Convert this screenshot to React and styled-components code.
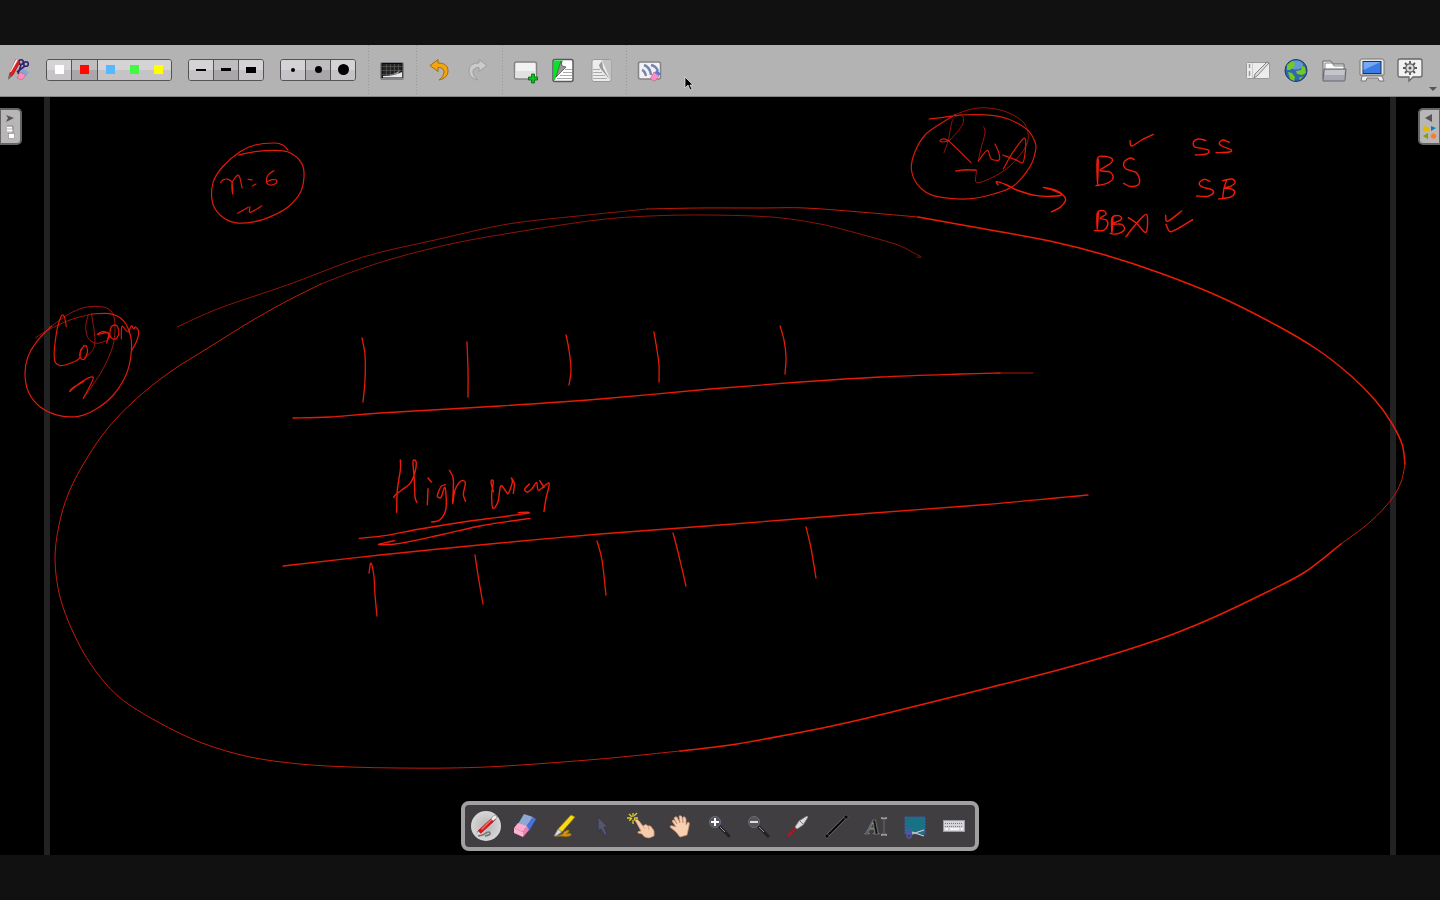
import React from 'react';
import styled, { createGlobalStyle } from 'styled-components';

const GlobalStyle = createGlobalStyle`
  * { box-sizing: border-box; }
  body { margin: 0; background: #111; font-family: "Liberation Sans", Arial, sans-serif; }
`;

const Screen = styled.div`
  min-height: 100vh;
  display: flex;
  flex-direction: column;
  padding: 45px 0;
  background: #111;
`;

const Toolbar = styled.header`
  position: relative;
  display: flex;
  align-items: center;
  height: 52px;
  flex: none;
  padding: 0 18px 2px 6px;
  background: #b3b3b3;
  border-bottom: 1px solid #858585;
`;

const IconButton = styled.button`
  width: 24px;
  height: 26px;
  flex: none;
  display: flex;
  justify-content: center;
  align-items: center;
  padding: 0;
  border: 0;
  background: none;

  svg { flex: none; }
`;

const IconRow = styled.div`
  display: flex;
  gap: 14px;
`;

const Spacer = styled.div`
  flex: 1;
`;

const Divider = styled.span`
  align-self: stretch;
  width: 1px;
  margin: 0 11px 0 12px;
  background: repeating-linear-gradient(#999 0 1px, #b3b3b3 1px 3px);
`;

const Segments = styled.div`
  display: flex;
  flex: none;
  width: ${(p) => p.$width}px;
  height: 22px;
  margin-left: 16px;
  border: 1px solid #555358;
  border-radius: 3px;
  overflow: hidden;
`;

const Segment = styled.button`
  flex: 1;
  display: grid;
  place-items: center;
  padding: 0;
  border: 0 solid #555358;
  border-width: ${(p) => (p.$on ? '0 1px' : '0')};
  background: ${(p) =>
    p.$on
      ? 'linear-gradient(#bfbdc0 50%, #a9a7aa 50%)'
      : 'linear-gradient(#d5d3d6 50%, #c5c3c6 50%)'};
`;

const Swatch = styled.span`
  width: ${(p) => p.$w}px;
  height: ${(p) => p.$h}px;
  border-radius: ${(p) => (p.$round ? '50%' : '0')};
  background: ${(p) => p.$color || '#000'};
`;

const MoreMark = styled.span`
  position: absolute;
  right: 3px;
  bottom: 5px;
  border: 4px solid transparent;
  border-top-color: #555;
  border-bottom: 0;
`;

const Pointer = styled.svg`
  position: absolute;
  left: 684px;
  top: 31px;
`;

const Board = styled.main`
  position: relative;
  flex: 1;
  min-height: 758px;
  background: #000;
  padding: 0 44px;
  display: flex;
`;

const Sheet = styled.div`
  flex: 1;
  border: solid #222224;
  border-width: 0 6px;
`;

const Ink = styled.svg`
  position: absolute;
  left: 0;
  top: 0;
  width: 100%;
  fill: none;
  stroke-linecap: round;
  stroke-linejoin: round;
`;

const SideTab = styled.button`
  position: absolute;
  top: 11px;
  ${(p) => (p.$right ? 'right: 0;' : 'left: 0;')}
  width: 22px;
  height: 37px;
  padding: 0;
  background: #b9b6b8;
  border: 2px solid #656366;
  border-width: ${(p) => (p.$right ? '2px 1px 2px 2px' : '2px 2px 2px 1px')};
  border-radius: ${(p) => (p.$right ? '5px 0 0 5px' : '0 5px 5px 0')};
`;

const Palette = styled.nav`
  position: absolute;
  bottom: 4px;
  left: 50%;
  transform: translateX(-50%);
  display: flex;
  align-items: center;
  gap: 9px;
  height: 50px;
  padding: 0 6px;
  background: #403e41;
  border: 4px solid #a19fa2;
  border-radius: 8px;
`;

const ToolButton = styled.button`
  width: 30px;
  height: 30px;
  padding: 0;
  border: 0;
  border-radius: 50%;
  background: ${(p) => (p.$on ? 'radial-gradient(circle, #b5b5b5, #d2d2d2 60%, #e6e6e6)' : 'none')};
`;

const Icon = ({ size = 26, children }) => (
  <svg width={size} height={size} viewBox={`0 0 ${size} ${size}`} display="block" overflow="visible" aria-hidden="true">
    {children}
  </svg>
);

const icons = {
  stylus: (
    <g transform="translate(1 0)">
      <g fill="none" stroke="#302070" strokeWidth="1.6">
        <circle cx="15" cy="5" r="2.3" /><circle cx="20" cy="7" r="2.3" />
        <path d="M15 8l-3 9M19 9l-8 6" />
      </g>
      <path d="M10 2l4 3-7 13-4 3 1-5z" fill="#e91b20" stroke="#872020" strokeWidth=".7" />
      <path d="M10 2l2 1-7 12-1 0z" fill="#eee" /><path d="M3 17l3 2-4 4z" fill="#666" />
      <path d="M13 17l4-5 6 3-4 5z" fill="#81a5de" /><path d="M12 19l2-4 6 3-4 5-5-2z" fill="#ff8dbd" stroke="#b66" strokeWidth=".6" />
    </g>
  ),
  backdrop: (
    <>
      <rect x="1" y="5" width="24" height="18" rx="2" fill="#85838a" />
      <rect x="3" y="6.500" width="20" height="14" fill="#242424" stroke="#080808" />
      <path d="M3 9.500h20M3 13.500h20M3 17.500h20M7.500 7v13M11.500 7v13M15.500 7v13M19.500 7v13" stroke="#5c5c5c" strokeWidth=".7" />
      <path d="M4 19q12 0 19-4v5.500H4z" fill="#e8e8e8" /><path d="M9 18q8-1 12-5l-2 4z" fill="#999" />
    </>
  ),
  undo: (
    <path d="M3 8.500L11 2.500v3.500c7 0 10 3 10 8 0 5-4 8-9 9 3-2 5-5 5-8 0-3-2-4.500-6-4.500v4z" fill="#f3a60c" stroke="#a06a10" strokeLinejoin="round" />
  ),
  redo: (
    <path d="M22 8.500L14 2.500v3.500c-7 0-10 3-10 8 0 5 4 8 9 9-3-2-5-5-5-8 0-3 2-4.500 6-4.500v4z" fill="#cbcbcb" stroke="#9c9c9c" strokeLinejoin="round" />
  ),
  addPage: (
    <>
      <rect x="1.500" y="5" width="22" height="17" rx="2" fill="#f2f2f2" stroke="#858286" strokeWidth="1.500" />
      <path d="M2.500 14h20v7h-20z" fill="#e1e1e1" />
      <path d="M18.500 17h3v3h3v3h-3v3h-3v-3h-3v-3h3z" fill="#08c51b" stroke="#056010" strokeWidth=".8" />
    </>
  ),
  nextPage: (
    <>
      <rect x="2" y="2.500" width="20" height="22" rx="2" fill="#fff" stroke="#58595c" strokeWidth="1.500" />
      <path d="M3 3.500h9L4 23H3z" fill="#08e227" /><path d="M10 4l1 5 4 1L5 20z" fill="#999" stroke="#555" strokeWidth=".8" />
      <path d="M14 12.500h7M12 15.500h9M9 18.500h12M6 21.500h15" stroke="#aaa" />
    </>
  ),
  lastPage: (
    <>
      <rect x="3" y="2.500" width="19" height="22" rx="2" fill="#ececec" stroke="#999" />
      <path d="M13 3h8.500v20z" fill="#c2c2c2" /><path d="M13 4l-3 4 1 3 10 12-7-12z" fill="#999" />
      <path d="M4 12.500h7M4 15.500h9M4 18.500h12M4 21.500h14" stroke="#aaa" />
    </>
  ),
  erase: (
    <>
      <rect x="1.500" y="5" width="22" height="17" rx="2" fill="#f2f2f4" stroke="#858286" strokeWidth="1.500" />
      <path d="M5 13q3 1 4 6M7 8q6 2 7 10M14 8q5 1 7 6" fill="none" stroke="#7884b0" strokeWidth="2.400" />
      <path d="M17 16l3-3 4 4-4 3z" fill="#577ade" /><path d="M17 15l5 4-4 5-5-2z" fill="#ff8fc6" stroke="#bb6698" strokeWidth=".7" />
    </>
  ),
  board: (
    <>
      <rect x="1.500" y="5.500" width="23" height="16" rx="1" fill="#ececec" stroke="#999" />
      <path d="M4.500 7v4M4.500 14v5" stroke="#999" strokeWidth="1.500" /><path d="M7.500 6v15" stroke="#ccc" />
      <path d="M24 6L12 19l-3 2 1-4L22 5z" fill="#ddd" stroke="#777" strokeWidth=".9" />
    </>
  ),
  globe: (
    <>
      <circle cx="13" cy="13.500" r="11" fill="#3266ae" stroke="#183968" />
      <ellipse cx="13" cy="8" rx="7" ry="4.500" fill="#78aee0" opacity=".7" />
      <path d="M4 8l5-4 3 2-1 4-4 3-3 0zM5 15l4 1 3 4-1 4-4-2zM13 14l5-1 1-4 3 1 1 6-4 2-5-1zM16 21l4-2-3 4z" fill="#72ca20" />
    </>
  ),
  folder: (
    <>
      <path d="M2 22V4h8l2 3h11v6" fill="#eee" stroke="#666" /><path d="M4 21V6h7l2 3h10v9" fill="#fff" stroke="#888" />
      <path d="M2 24l1-12h22l-1 11q0 1-1 1z" fill="#a8a8b2" stroke="#65656e" /><path d="M4 13h20l-1 5H4z" fill="#c4c4cb" />
    </>
  ),
  display: (
    <>
      <path d="M3 2h20q2 0 2 2v14H1V4q0-2 2-2z" fill="#e8e8e8" stroke="#777" />
      <rect x="4" y="4.500" width="18" height="12" fill="#397ce5" stroke="#18345e" />
      <path d="M4.500 5h17L4.500 13z" fill="#76a9f5" />
      <path d="M2 24l1-5h20l2 5h-5l-1-3H8l-1 3z" fill="#eee" stroke="#777" />
    </>
  ),
  settings: (
    <>
      <path d="M3 2h20q2 0 2 2v14q0 2-2 2h-7l-4 4v-4H3q-2 0-2-2V4q0-2 2-2z" fill="#f2f2f2" stroke="#666" strokeWidth="1.300" />
      <path d="M13 4v14M6 11h14M8 6l10 10M18 6L8 16" stroke="#555" strokeWidth="1.800" />
      <circle cx="13" cy="11" r="4.200" fill="#ddd" stroke="#666" strokeWidth="1.300" /><circle cx="13" cy="11" r="1.500" fill="#555" />
    </>
  ),
};

const toolIcons = {
  pen: (
    <>
      <path d="M7 25q6-1 8-3 3-2 4 0 1 2-5 3" fill="none" stroke="#777" strokeWidth="1.600" />
      <path d="M22 6l3 2L9 23l-3 1 1-4z" fill="#d9141a" stroke="#9b171b" strokeWidth=".8" /><path d="M10 18L20 8l1 1-10 10z" fill="#ff6b68" />
      <path d="M22 5l3-1 1 3-4 3-2-2z" fill="#eee" stroke="#888" strokeWidth=".6" /><path d="M7 20l3 3-5 2z" fill="#ddd" />
    </>
  ),
  eraser: (
    <>
      <path d="M14 3l9 3-7 10-8-3z" fill="#8da8d3" /><path d="M23 6l3 2-7 12-3-4z" fill="#4b70e0" />
      <path d="M8 12l9 3-4 6-9-4z" fill="#ffa9cc" /><path d="M4 17l9 4v5l-9-4z" fill="#ffb4d0" /><path d="M13 21l4-6 2 4-6 7z" fill="#e783b7" />
    </>
  ),
  marker: (
    <>
      <path d="M6 25q9-1 9-4 5-3 5-1-1 2-3 3 6-1 5 1-2 2-9 1z" fill="#d69a0b" stroke="#a97507" />
      <path d="M22 4l4 2-13 15-5 2 1-5z" fill="#f8dc13" stroke="#9f7708" strokeWidth=".8" /><path d="M9 18l4 3-6 4-2 0z" fill="#ddd" stroke="#75777a" strokeWidth=".8" />
    </>
  ),
  select: <path d="M10 6l10 10-4 0 3 7-2 2-4-7-3 2z" fill="#55566a" stroke="#343752" />,
  touch: (
    <>
      <path d="M6 2v11M0 7h11M2 3l8 8M10 2L2 10" stroke="#ddcd28" strokeWidth="1.300" strokeDasharray="4 3" />
      <path d="M8 9q2-2 4 1l4 5q3-3 5 0 3-1 4 2 3 2 2 8l-5 2q-5 0-7-4l-4-1q-1-2 3-2z" fill="#f7cdae" stroke="#c98f6c" strokeWidth=".8" />
      <path d="M16 15l2 3M21 15l1 4" stroke="#ce9570" strokeWidth=".7" />
    </>
  ),
  hand: (
    <path d="M9 6q2-1 3 2l2 4-1-7q2-1 3 1l1 6V6q2-1 3 2v6l2-3q2 0 1 4l-2 9-7 2-4-5-6-5q0-2 3-1l3 1-4-6q1-2 3 0l2 3-3-6z" fill="#f8cfb1" stroke="#c99472" strokeWidth=".8" />
  ),
  zoomIn: (
    <>
      <path d="M15 16l9 9" stroke="#222" strokeWidth="3" strokeLinecap="round" /><path d="M15 16l5 5" stroke="#999" />
      <circle cx="10" cy="11" r="5.500" fill="#555" stroke="#68688a" /><path d="M10 7v8M6 11h8" stroke="#fff" strokeWidth="2" />
    </>
  ),
  zoomOut: (
    <>
      <path d="M15 16l9 9" stroke="#222" strokeWidth="3" strokeLinecap="round" /><path d="M15 16l5 5" stroke="#999" />
      <circle cx="10" cy="11" r="5.500" fill="#555" stroke="#68687d" /><path d="M6 11h8" stroke="#ddd" strokeWidth="2" />
    </>
  ),
  laser: (
    <>
      <path d="M13 17L5 25" stroke="#a81a24" strokeWidth="2.500" /><path d="M24 5l1 1-5 8-6 4-2-2 4-6z" fill="#dedcdc" stroke="#888" strokeWidth=".8" />
      <path d="M17 10l3 3" stroke="#777" />
    </>
  ),
  line: (
    <>
      <path d="M5 25L24 6" stroke="#898989" strokeWidth="3" /><path d="M5 25L24 6" stroke="#000" strokeWidth="2" />
      <g fill="#050505" stroke="#666" strokeWidth=".6"><circle cx="5" cy="25" r="2" /><circle cx="24" cy="6" r="2" /></g>
    </>
  ),
  text: (
    <>
      <text x="5" y="23" fontFamily="Liberation Serif, serif" fontStyle="italic" fontWeight="700" fontSize="21" fill="#111" stroke="#929292" strokeWidth=".7">A</text>
      <path d="M20 7q3 0 3 2 0-2 3-2M23 9v13M20 24q3 0 3-2 0 2 3 2" fill="none" stroke="#999" strokeWidth="2" /><path d="M23 8v15" stroke="#111" />
    </>
  ),
  capture: (
    <>
      <rect x="5" y="6" width="20" height="17" fill="#197184" stroke="#4058bb" strokeDasharray="2 1" />
      <path d="M12 23l12-4M12 21l12 4" stroke="#d0cfcb" strokeWidth="1.300" />
      <g fill="none" stroke="#5552a7" strokeWidth="1.500"><circle cx="9" cy="20" r="2" /><circle cx="9" cy="25" r="2" /></g>
    </>
  ),
  keyboard: (
    <>
      <rect x="4.500" y="9.500" width="21" height="11" fill="#d4d4d8" stroke="#9a9aa2" />
      <path d="M6 12.500h18M6 15.500h18" stroke="#77777f" strokeDasharray="1 1" /><path d="M6 18h3M11 18h9M22 18h2" stroke="#f4f4f4" strokeWidth="2" />
    </>
  ),
};

/* Turns sampled pen positions into one smooth curve. */
function curve(values, [ox, oy, scale]) {
  const pts = [];
  for (let i = 0; i < values.length; i += 2) pts.push([ox + values[i] / scale, oy + values[i + 1] / scale]);
  let d = `M${pts[0]}`;
  for (let i = 0; i < pts.length - 1; i += 1) {
    const a = pts[Math.max(i - 1, 0)], b = pts[i], c = pts[i + 1], e = pts[Math.min(i + 2, pts.length - 1)];
    d += `C${b[0] + (c[0] - a[0]) / 6},${b[1] + (c[1] - a[1]) / 6} ${c[0] - (e[0] - b[0]) / 6},${c[1] - (e[1] - b[1]) / 6} ${c[0]},${c[1]}`;
  }
  return d;
}

/* frame = [origin x, origin y, samples per unit]; each stroke is a run of x y samples. */
const notes = [
  { name: 'Colony outline, light start', frame: [0, 0, 1], color: '#8e1409', width: 1, strokes: [
    '177 327 220 308 290 284 363 257 435 240 508 224 578 216 647 209',
    '321 284 355 271 395 258 455 243 523 231 597 220 650 216 707 215 771 217 815 223 845 230 895 244 912 252 921 257 917 257',
  ] },
  { name: 'Colony outline, thin', frame: [0, 0, 1], color: '#c41b0a', width: 1, strokes: [
    '647 209 700 208 760 208 805 208 860 212 918 217',
    '680 751 600 759 505 766 450 768 399 768 350 767 300 764 250 757 202 743 158 722 119 697 92 666 73 632 60 597 55 560 59 525 69 492 87 458 108 428 135 400 170 372 208 348 248 323 285 302 321 284',
    '1405 464 1401 482 1391 500 1370 522 1341 544',
  ] },
  { name: 'Colony outline, full', frame: [0, 0, 1], color: '#ea1c06', width: 1.5, strokes: [
    '918 217 985 229 1050 241 1105 255 1160 273 1218 296 1276 325 1318 350 1350 375 1375 400 1391 422 1402 444 1405 464',
    '1341 544 1305 572 1267 592 1210 619 1157 640 1080 664 992 687 850 722 781 736 730 745 680 751',
  ] },
  { name: 'Road and plots', frame: [0, 0, 1], color: '#e61b06', width: 1.3, strokes: [
    '293 418 330 417 380 413 500 406 600 399 710 389 800 382 880 377 960 374 1000 373',
    '283 566 380 555 500 543 600 534 720 525 860 514 980 505 1088 495',
    '362 338 365 355 365 380 363 402', '467 342 468 370 468 397', '566 335 569 350 571 370 569 385',
    '654 332 657 350 659 365 659 382', '780 326 784 340 786 357 785 374',
    '369 573 371 563 374 577 375 595 377 616', '475 555 478 575 483 604', '597 541 602 560 606 595',
    '673 533 678 552 686 586', '806 527 811 548 816 578',
  ] },
  { name: 'Road end', frame: [0, 0, 1], color: '#a8180a', width: 1.2, strokes: ['1000 373 1033 373'] },
  { name: 'n = 6', frame: [200, 130, 3], color: '#e21a08', width: 1.2, strokes: [
    '115 75 165 65 225 61 270 68 305 100 312 140 300 190 265 230 220 256 165 275 105 278 60 255 37 215 40 155 70 108 120 65 165 45 225 39 250 46 264 60',
    '62 158 70 149 85 148 96 158 98 192 96 160 112 136 120 145 126 174', '144 148 157 150', '157 168 168 162',
    '222 122 205 134 199 155 210 165 228 160 229 150 216 149 203 154', '113 250 145 232', '150 230 151 247 185 228',
  ] },
  { name: 'RWA', frame: [900, 100, 3], color: '#981408', width: 1, strokes: [
    '165 44 215 27 265 24 320 36 365 62 382 90 383 125 360 165 315 210 260 240 228 246 229 211 215 210 167 213',
    '132 158 145 120 156 65 170 48 187 48 190 65 177 90 148 122', '251 80 255 100 243 145 235 183',
  ] },
  { name: 'RWA', frame: [900, 100, 3], color: '#da1a08', width: 1.2, strokes: [
    '87 57 130 52 180 45 235 44 300 50 350 68 385 92 405 125 407 150 390 200 340 258 280 282 215 296 150 295 90 283 50 250 34 205 45 155 75 105 120 72 165 44',
    '148 122 125 126 122 120 145 122 213 188',
    '235 183 262 151 273 176 297 180 297 160 285 132',
    '310 207 340 155 375 115 370 185 345 178 308 165', '167 213 200 209 229 211',
  ] },
  { name: 'BS SS SB BBA', frame: [900, 100, 3], color: '#f21b08', width: 1.4, strokes: [
    '294 255 290 245 320 255 350 270 410 287 470 288 484 282 460 271 430 262 465 270 492 288 496 303 480 322 454 336',
    '690 122 695 138 725 120 760 103',
    '595 178 593 255 592 178 610 169 635 175 632 190 600 211 630 216 639 235 620 250 588 257',
    '703 179 690 174 672 187 677 206 708 217 718 235 715 254 690 259 671 250',
    '917 121 895 117 881 125 883 140 905 145 926 151 920 162 886 165', '988 127 970 120 958 128 965 138 993 149 988 156 948 158',
    '930 244 912 238 898 249 905 260 935 269 940 279 922 289 890 288', '980 240 972 265 968 295 M 968 242 996 237 1005 248 990 260 972 263 997 268 1004 278 992 291 956 297',
    '595 339 592 390 592 339 610 332 618 343 600 355 619 360 623 375 610 391 583 392',
    '639 352 636 400 636 354 656 347 664 358 638 372 665 373 673 389 650 402 630 400',
    '678 410 710 370 740 344 738 397 710 370 685 353', '797 346 803 364 845 333', '798 373 810 395 835 385 878 359',
  ] },
  { name: 'Colony', frame: [0, 290, 3], color: '#9c1508', width: 1, strokes: [
    '155 108 205 73 255 52 310 51 338 70 345 115 338 170 310 235 280 282 250 325',
    '275 73 285 150 275 185 254 199', '265 74 257 110 265 145 290 160 322 151', '106 144 140 122 210 90 275 72',
  ] },
  { name: 'Colony', frame: [0, 290, 3], color: '#e21a09', width: 1.2, strokes: [
    '275 72 330 71 370 92 392 140 393 195 378 255 340 315 290 356 235 379 175 376 120 350 85 305 75 250 84 200 110 155 155 108',
    '250 325 280 263 245 275 210 304 219 293 252 274',
    '199 110 193 80 183 80 169 130 163 205 178 226 205 222 238 205 242 180 258 167 262 188 252 208 241 203 240 187 252 167',
    '322 151 329 135 310 125 292 134 325 128 320 159',
    '348 105 334 110 330 137 345 148 356 132 353 110 343 104', '364 146 366 109 384 126 394 107 401 117 407 111 416 126 410 153 396 180',
  ] },
  { name: 'High way', frame: [340, 450, 3], color: '#ee1b08', width: 1.4, strokes: [
    '181 30 181 60 172 120 170 187', '161 142 167 134 195 113 212 98 224 70 229 40 223 30 219 38 223 90 225 140 230 157',
    '264 84 274 96', '264 116 262 164', '316 104 303 110 292 137 303 142 315 112 318 175 300 209 275 216',
    '328 61 340 88 338 160 345 120 363 93 376 98 370 133 377 154',
    '460 125 453 95 460 94 455 135 459 175 474 155 482 108 497 123 505 130 517 97 514 84 523 100 520 130',
    '568 102 554 118 563 126 577 115 590 97 596 121 627 99 618 145 612 184 M 599 92 612 112',
    '58 265 140 256 240 237 370 216 475 202 555 191 566 187 535 188', '164 272 140 277 117 284 180 280 300 255 420 228 500 215 570 205',
  ] },
];

const strokePath = (text, frame) =>
  text.split('M').map((part) => curve(part.trim().split(/\s+/).map(Number), frame)).join('');

const colors = [['White', '#fff'], ['Red', '#ff0800'], ['Blue', '#55b9ff'], ['Green', '#43fa43'], ['Yellow', '#ff0']];
const lines = [['Fine line', 10, 2], ['Medium line', 10, 3], ['Thick line', 10, 6]];
const dots = [['Small eraser', 4], ['Medium eraser', 7], ['Large eraser', 11]];
const tools = [
  ['pen', 'Annotate'], ['eraser', 'Erase annotation'], ['marker', 'Highlight'], ['select', 'Select'], ['touch', 'Interact'],
  ['hand', 'Scroll page'], ['zoomIn', 'Zoom in'], ['zoomOut', 'Zoom out'], ['laser', 'Laser pointer'], ['line', 'Draw lines'],
  ['text', 'Write text'], ['capture', 'Capture'], ['keyboard', 'Virtual keyboard'],
];

const Action = ({ name, label }) => (
  <IconButton aria-label={label}><Icon>{icons[name]}</Icon></IconButton>
);

export default function App() {
  return (
    <>
      <GlobalStyle />
      <Screen>
        <Toolbar>
          <Action name="stylus" label="Stylus" />
          <Segments $width={126}>
            {colors.map(([label, color], i) => (
              <Segment key={label} aria-label={label} $on={i === 1}>
                <Swatch $w={9} $h={9} $color={color} />
              </Segment>
            ))}
          </Segments>
          <Segments $width={76}>
            {lines.map(([label, w, h], i) => (
              <Segment key={label} aria-label={label} $on={i === 1}><Swatch $w={w} $h={h} /></Segment>
            ))}
          </Segments>
          <Segments $width={76}>
            {dots.map(([label, d], i) => (
              <Segment key={label} aria-label={label} $on={i === 1}><Swatch $w={d} $h={d} $round /></Segment>
            ))}
          </Segments>
          <Divider />
          <Action name="backdrop" label="Background" />
          <Divider />
          <IconRow><Action name="undo" label="Undo" /><Action name="redo" label="Redo" /></IconRow>
          <Divider />
          <IconRow>
            <Action name="addPage" label="New page" />
            <Action name="nextPage" label="Previous page" />
            <Action name="lastPage" label="Next page" />
          </IconRow>
          <Divider />
          <Action name="erase" label="Clear page" />
          <Spacer />
          <IconRow>
            <Action name="board" label="Board" />
            <Action name="globe" label="Web" />
            <Action name="folder" label="Documents" />
            <Action name="display" label="Show desktop" />
            <Action name="settings" label="Menu" />
          </IconRow>
          <MoreMark />
          <Pointer width="10" height="16" viewBox="0 0 10 16">
            <path d="M1 1v11l3-3 2 5 2-1-2-4h3z" fill="#000" stroke="#ddd" strokeWidth=".8" />
          </Pointer>
        </Toolbar>
        <Board>
          <Sheet />
          <Ink viewBox="0 97 1440 758" role="img" aria-label="Handwritten notes">
            {notes.map((note, n) => (
              <g key={n} stroke={note.color} strokeWidth={note.width}>
                {note.strokes.map((s) => <path key={s} d={strokePath(s, note.frame)} />)}
              </g>
            ))}
          </Ink>
          <SideTab aria-label="Open pages">
            <svg width="19" height="33" viewBox="0 0 19 33" display="block">
              <path d="M5 5l8 3-8 4 2-4z" fill="#555" />
              <path d="M6 17.500h5M6 20.500h6" stroke="#fff" strokeWidth="2" /><rect x="7.500" y="23.500" width="6" height="5" fill="#fff" stroke="#888" strokeWidth=".6" />
              <path d="M6 16h6v7" fill="none" stroke="#777" strokeWidth=".7" />
            </svg>
          </SideTab>
          <SideTab $right aria-label="Open library">
            <svg width="19" height="33" viewBox="0 0 19 33" display="block">
              <path d="M12 4v8L5 8z" fill="#555" />
              <path d="M3 16h2l1 1h3v4H3z" fill="#e3b909" /><path d="M11 16l5 2-5 3z" fill="#087fba" />
              <path d="M8 23v6l-5-3z" fill="#819d08" /><circle cx="13.500" cy="26" r="2.600" fill="#ff7929" />
            </svg>
          </SideTab>
          <Palette aria-label="Drawing tools">
            {tools.map(([name, label], i) => (
              <ToolButton key={name} aria-label={label} $on={i === 0}><Icon size={30}>{toolIcons[name]}</Icon></ToolButton>
            ))}
          </Palette>
        </Board>
      </Screen>
    </>
  );
}
